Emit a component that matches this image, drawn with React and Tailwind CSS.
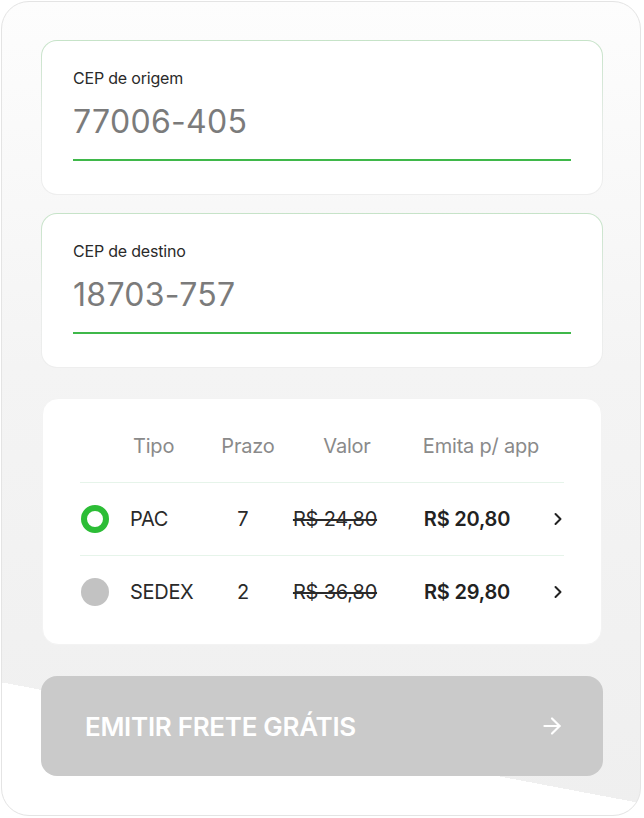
import React from "react";
import { ArrowRight, ChevronRight } from "lucide-react";

function CepCard({ label, value }) {
  return (
    <div className="w-[562px] h-[155px] rounded-[16px] border border-transparent [background:linear-gradient(#fff,#fff)_padding-box,linear-gradient(to_bottom,#c6e3c8,#e9ecea_60%,#eeeeee)_border-box] pt-[27px] px-[31px]">
      <div className="text-[16px] leading-[20px] text-[#2a2a2a] tracking-[-0.2px]">{label}</div>
      <div className="mt-[14px] text-[32px] leading-[40px] text-[#7b7b7b] tracking-[0.3px]">{value}</div>
      <div className="mt-[17px] h-[1.5px] w-[498px] bg-[#3fb84a]" />
    </div>
  );
}

function Row({ active, tipo, prazo, old, price }) {
  return (
    <div className="flex items-center h-[72px]">
      <div className="w-[30px] flex justify-center">
        {active ? (
          <div className="w-[28px] h-[28px] rounded-full border-[6px] border-[#2cbd36] bg-white" />
        ) : (
          <div className="w-[28px] h-[28px] rounded-full bg-[#c2c2c2]" />
        )}
      </div>
      <div className="w-[103px] pl-[20px] text-[20px] text-[#2a2a2a] tracking-[-0.3px]">{tipo}</div>
      <div className="w-[60px] text-center text-[20px] text-[#2a2a2a]">{prazo}</div>
      <div className="w-[124px] text-center text-[20px] text-[#2a2a2a] line-through decoration-[1.5px] tracking-[-0.2px]">{old}</div>
      <div className="w-[140px] text-center text-[20px] font-semibold text-[#222222] tracking-[-0.2px]">{price}</div>
      <div className="flex-1 flex justify-end">
        <ChevronRight size={20} strokeWidth={2.4} className="text-[#222] -mr-[4px]" />
      </div>
    </div>
  );
}

export default function App() {
  return (
    <div className="w-[644px] h-[818px] bg-white" style={{ fontFamily: "Inter, 'Noto Sans', sans-serif" }}>
      <div className="ml-[1px] mt-[1px] w-[640px] h-[815px] rounded-[28px] border border-[#e4e4e4] [background:linear-gradient(190.7deg,transparent_85.8%,#ffffff_85.8%),linear-gradient(to_bottom,#fdfdfd,#f4f4f4_45%,#efefef)] pl-[39px] pt-[38px]">
        <div className="flex flex-col">
          <CepCard label="CEP de origem" value="77006-405" />
          <div className="h-[18px]" />
          <CepCard label="CEP de destino" value="18703-757" />
          <div className="h-[30px]" />
          <div className="ml-[1px] w-[560px] h-[247px] rounded-[16px] bg-white border border-[#f3f3f3] pl-[37px] pr-[37px] pt-[29px]">
            <div className="flex items-center h-[36px] text-[20px] text-[#8a8a8a] tracking-[-0.2px]">
              <div className="w-[53px]" />
              <div className="w-[84px]">Tipo</div>
              <div className="w-[62px] text-center">Prazo</div>
              <div className="w-[136px] text-center">Valor</div>
              <div className="w-[132px] text-center">Emita p/ app</div>
            </div>
            <div className="mt-[18px] h-px bg-[#e6f4ea]" />
            <Row active tipo="PAC" prazo="7" old="R$ 24,80" price="R$ 20,80" />
            <div className="h-px bg-[#e6f4ea]" />
            <Row tipo="SEDEX" prazo="2" old="R$ 36,80" price="R$ 29,80" />
          </div>
          <div className="h-[31px]" />
          <div className="w-[562px] h-[100px] rounded-[16px] bg-[#cacaca] flex items-center justify-between pl-[44px] pr-[38px]">
            <span className="text-[26px] font-semibold text-white tracking-[-0.3px]">EMITIR FRETE GRÁTIS</span>
            <ArrowRight size={26} strokeWidth={2} className="text-white" />
          </div>
        </div>
      </div>
    </div>
  );
}
